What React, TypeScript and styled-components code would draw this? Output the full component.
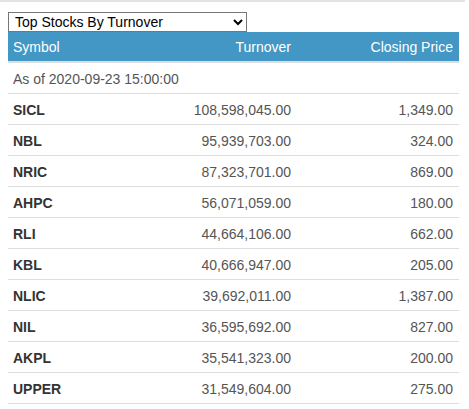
import React from "react";
import styled, { createGlobalStyle } from "styled-components";

const Global = createGlobalStyle`
  html, body { margin: 0; padding: 0; background: #fff; }
  body { font-family: "Liberation Sans", Arial, sans-serif; font-size: 14px; color: #333; }
  *, *::before, *::after { box-sizing: border-box; }
`;

const Panel = styled.div`
  width: 465px;
  border-top: 2px solid #e3e3e3;
  padding: 10px 6px 0 8px;
`;

const Picker = styled.select`
  display: block;
  width: 239px;
  height: 20px;
  margin: 0;
  padding: 0 0 0 2px;
  font-family: "Liberation Sans", Arial, sans-serif;
  font-size: 14px;
  color: #000;
  background: #fff;
  border: 1px solid #767676;
  border-radius: 0;
`;

const Table = styled.table`
  width: 451px;
  border-collapse: collapse;
  table-layout: fixed;
  font-size: 14px;
  line-height: 20px;
`;

const HeadCell = styled.th<{ $align?: string; $w: number }>`
  width: ${(p) => p.$w}px;
  background: #4397c5;
  color: #fff;
  font-weight: normal;
  text-align: ${(p) => p.$align || "left"};
  padding: 5px 6px 4px 5px;
  border-bottom: 2px solid #ddd;
`;

const Cell = styled.td<{ $align?: string; $bold?: boolean }>`
  padding: 6px 6px 4px 5px;
  border-bottom: 1px solid #ddd;
  text-align: ${(p) => p.$align || "left"};
  font-weight: ${(p) => (p.$bold ? "bold" : "normal")};
  color: ${(p) => (p.$bold ? "#333" : "#555")};
`;

const rows = [
  ["SICL", "108,598,045.00", "1,349.00"],
  ["NBL", "95,939,703.00", "324.00"],
  ["NRIC", "87,323,701.00", "869.00"],
  ["AHPC", "56,071,059.00", "180.00"],
  ["RLI", "44,664,106.00", "662.00"],
  ["KBL", "40,666,947.00", "205.00"],
  ["NLIC", "39,692,011.00", "1,387.00"],
  ["NIL", "36,595,692.00", "827.00"],
  ["AKPL", "35,541,323.00", "200.00"],
  ["UPPER", "31,549,604.00", "275.00"],
];

export default function App() {
  return (
    <>
      <Global />
      <Panel>
        <Picker defaultValue="turnover">
          <option value="turnover">Top Stocks By Turnover</option>
          <option value="gainers">Top Gainers</option>
          <option value="losers">Top Losers</option>
        </Picker>
        <Table>
          <thead>
            <tr>
              <HeadCell $w={140}>Symbol</HeadCell>
              <HeadCell $w={149} $align="right">Turnover</HeadCell>
              <HeadCell $w={162} $align="right">Closing Price</HeadCell>
            </tr>
          </thead>
          <tbody>
            <tr>
              <Cell colSpan={3}>As of 2020-09-23 15:00:00</Cell>
            </tr>
            {rows.map((r) => (
              <tr key={r[0]}>
                <Cell $bold>{r[0]}</Cell>
                <Cell $align="right">{r[1]}</Cell>
                <Cell $align="right">{r[2]}</Cell>
              </tr>
            ))}
          </tbody>
        </Table>
      </Panel>
    </>
  );
}
